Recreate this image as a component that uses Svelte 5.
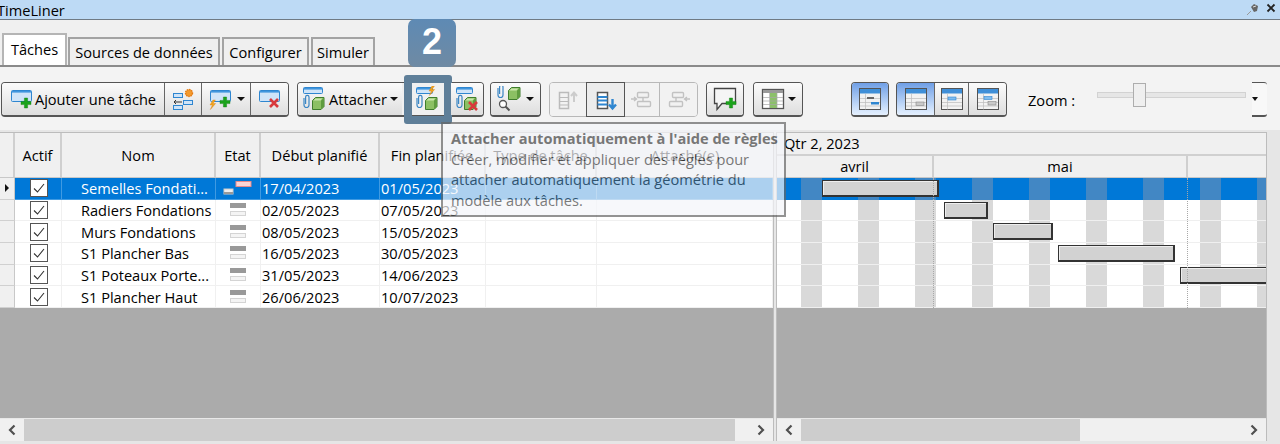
<script>
  const tasks = [
    { name: 'Semelles Fondati...', start: '17/04/2023', end: '01/05/2023', bar: [45, 117], sel: true },
    { name: 'Radiers Fondations', start: '02/05/2023', end: '07/05/2023', bar: [167, 44] },
    { name: 'Murs Fondations', start: '08/05/2023', end: '15/05/2023', bar: [216, 60] },
    { name: 'S1 Plancher Bas', start: '16/05/2023', end: '30/05/2023', bar: [281, 117] },
    { name: 'S1 Poteaux Porte...', start: '31/05/2023', end: '14/06/2023', bar: [403, 120] },
    { name: 'S1 Plancher Haut', start: '26/06/2023', end: '10/07/2023', bar: null }
  ];
</script>

{#snippet rect(x, y, w, h)}
  <rect x={x + .5} y={y + .5} width={w} height={h} rx="1" fill="#cfe4f8" stroke="#2f86d0" />
  <rect x={x + 1} y={y + 1} width={w - 1} height="1.6" fill="#3f96de" />
{/snippet}
{#snippet plus(x, y)}
  <path d="M{x - 1.6} {y - 5}h3.2v3.4h3.4v3.2h-3.4v3.4h-3.2v-3.4h-3.4v-3.2h3.4z" fill="#1ba31b" stroke="#0d7a0d" stroke-width=".4" />
{/snippet}
{#snippet cross(x, y)}
  <path d="M{x - 4} {y - 4}l8 8M{x + 4} {y - 4}l-8 8" stroke="#d8393b" stroke-width="2.6" fill="none" />
{/snippet}
{#snippet clip(x, y)}
  <path d="M{x} {y + 3}v7a2.500 2.500 0 0 0 5 0v-8a1.700 1.700 0 0 0-3.400 0v7" fill="none" stroke="#3b86c4" stroke-width="1.200" />
{/snippet}
{#snippet cube(x, y)}
  <path d="M{x + .5} {y + 3.500}l3-3h8.500v9l-3 3h-8.500z" fill="#8cc063" stroke="#3f7d2c" />
  <path d="M{x + 1.500} {y + 3.500}l2-2h7l-2 2z" fill="#c9e6ab" />
  <path d="M{x + 9} {y + 3.500}l3-3v9l-3 3z" fill="#5f9c3f" />
{/snippet}
{#snippet bolt(x, y)}
  <path d="M{x + 3} {y}l-3 5h2.4l-2 4.5 5.2-6h-2.6l2.4-3.5z" fill="#f2a51e" stroke="#d97f10" stroke-width=".4" />
{/snippet}
{#snippet dd()}
  <span class="caret"></span>
{/snippet}
{#snippet chevL()}
  <svg width="8" height="12" viewBox="0 0 8 12"><path d="M6.500 1.500L2 6l4.500 4.500" fill="none" stroke="#505050" stroke-width="2.200" /></svg>
{/snippet}
{#snippet chevR()}
  <svg width="8" height="12" viewBox="0 0 8 12"><path d="M1.500 1.500L6 6l-4.500 4.500" fill="none" stroke="#505050" stroke-width="2.200" /></svg>
{/snippet}
{#snippet view(kind)}
  <svg width="24" height="24" viewBox="0 0 24 24">
    <rect x="1.500" y="1.500" width="21" height="21" fill="#f2f2f2" stroke="#555" />
    <rect x="2" y="2" width="20" height="4.500" fill="#3f8fd8" />
    <path d="M7.500 6.500v16M2 11.500h20M2 15.500h20M2 19h20" stroke="#bbb" stroke-width=".7" />
    {#if kind === 0}
      <rect x="9" y="10" width="7" height="2" fill="#666" />
      <rect x="13" y="15" width="8" height="2.500" fill="#2f86d0" />
    {:else if kind === 1}
      <rect x="12" y="15" width="8" height="3.500" fill="#c9c9c9" stroke="#888" stroke-width=".6" />
    {:else if kind === 2}
      <rect x="8" y="10" width="8" height="3" fill="#7fbdf0" stroke="#2f86d0" stroke-width=".6" />
    {:else}
      <rect x="8" y="9.500" width="8" height="3" fill="#7fbdf0" stroke="#2f86d0" stroke-width=".6" />
      <rect x="12" y="14.500" width="8" height="3.500" fill="#c9c9c9" stroke="#888" stroke-width=".6" />
    {/if}
  </svg>
{/snippet}

<div class="app">
  <header class="title">
    <span class="title-text">TimeLiner</span>
    <svg class="pin" width="14" height="14" viewBox="0 0 14 14"><path d="M1 13l4-4" stroke="#999" /><path d="M5 5l3-3 4 2-1 5-3 1z" fill="#666" /><path d="M7 5l3-1" stroke="#ddd" /></svg>
    <svg class="close" width="10" height="10" viewBox="0 0 10 10"><path d="M1.500 1.500l7 7M8.500 1.500l-7 7" stroke="#222" stroke-width="1.800" /></svg>
  </header>

  <nav class="tabs">
    <span class="tab active">Tâches</span>
    <span class="tab t-src">Sources de données</span>
    <span class="tab t-cfg">Configurer</span>
    <span class="tab t-sim">Simuler</span>
  </nav>

  <div class="toolbar">
    <div class="group g1">
      <button class="btn w-add">
        <svg width="24" height="22" viewBox="0 0 24 22">{@render rect(1, 2, 20, 11)}{@render plus(16, 15)}</svg>
        <span>Ajouter une tâche</span>
      </button>
      <button class="btn w37">
        <svg width="24" height="24" viewBox="0 0 24 24">
          <rect x="2.500" y="6.500" width="9" height="4" fill="#cfe4f8" stroke="#2f86d0" />
          <rect x="12.500" y="13.500" width="9" height="4" fill="#cfe4f8" stroke="#2f86d0" />
          <rect x="2.500" y="18.500" width="9" height="4" fill="#cfe4f8" stroke="#2f86d0" />
          <path d="M3 15h8M3 15l2-2M3 15l2 2" stroke="#333" fill="none" />
          <circle cx="18" cy="6" r="3.500" fill="#f39a2e" stroke="#e47a12" stroke-dasharray="1.500 .8" stroke-width="1.400" />
        </svg>
      </button>
      <button class="btn w49">
        <svg width="26" height="22" viewBox="0 0 26 22">{@render rect(2, 2, 20, 11)}{@render plus(17, 14)}{@render bolt(2, 12)}</svg>
        {@render dd()}
      </button>
      <button class="btn w37">
        <svg width="24" height="22" viewBox="0 0 24 22">{@render rect(1, 2, 20, 11)}{@render cross(16, 15)}</svg>
      </button>
    </div>

    <div class="group g2">
      <button class="btn w-att">
        <svg width="24" height="26" viewBox="0 0 24 26">{@render rect(1, 1, 19, 6)}{@render clip(2, 9)}{@render cube(10, 11)}</svg>
        <span>Attacher</span>
        {@render dd()}
      </button>
      <button class="btn w49 plain">
        <svg width="24" height="26" viewBox="0 0 24 26">{@render rect(1, 1, 16, 6)}{@render clip(2, 9)}{@render cube(10, 11)}{@render bolt(14, 0)}</svg>
        <span class="highlight"></span>
      </button>
      <button class="btn w32">
        <svg width="24" height="26" viewBox="0 0 24 26">{@render rect(1, 1, 16, 6)}{@render clip(2, 9)}{@render cube(9, 11)}{@render cross(18, 20)}</svg>
      </button>
    </div>

    <div class="group g3">
      <button class="btn w49">
        <svg width="26" height="26" viewBox="0 0 26 26">
          {@render clip(1, -1)}{@render cube(11, 1)}
          <circle cx="6" cy="18" r="3.500" fill="#fff" stroke="#555" stroke-width="1.300" />
          <path d="M8.500 20.500l4 4" stroke="#555" stroke-width="2" />
        </svg>
        {@render dd()}
      </button>
    </div>

    <div class="group g4">
      <button class="btn w37 dis">
        <svg width="24" height="24" viewBox="0 0 24 24"><rect x="3.500" y="4.500" width="9" height="16" fill="none" stroke="#bbb" stroke-width="1.500" /><path d="M3.500 9.500h9M3.500 13.500h9M3.500 17h9" stroke="#bbb" /><path d="M18 14V5M15 8l3-3.500L21 8" stroke="#ccc" stroke-width="2" fill="none" /></svg>
      </button>
      <button class="btn w37 on">
        <svg width="24" height="24" viewBox="0 0 24 24"><rect x="3.500" y="4.500" width="10" height="16" fill="#fff" stroke="#555" stroke-width="1.500" /><path d="M3.500 9h10M3.500 12.500h10M3.500 16.500h10" stroke="#2f86d0" stroke-width="2" /><path d="M18.500 11v9M15 16.500l3.500 4 3.500-4" stroke="#2f86d0" stroke-width="2.400" fill="none" /></svg>
      </button>
      <button class="btn w36 dis">
        <svg width="24" height="24" viewBox="0 0 24 24"><rect x="7.500" y="4.500" width="11" height="5" rx="1" fill="none" stroke="#c2c2c2" stroke-width="1.400" /><rect x="7.500" y="13.500" width="13" height="5" rx="1" fill="none" stroke="#c2c2c2" stroke-width="1.400" /><path d="M1 11h5M4 9l2.500 2L4 13M13 9.500v4" stroke="#c2c2c2" stroke-width="1.400" fill="none" /></svg>
      </button>
      <button class="btn w37 dis">
        <svg width="24" height="24" viewBox="0 0 24 24"><rect x="5.500" y="4.500" width="11" height="5" rx="1" fill="none" stroke="#c2c2c2" stroke-width="1.400" /><rect x="2.500" y="13.500" width="13" height="5" rx="1" fill="none" stroke="#c2c2c2" stroke-width="1.400" /><path d="M23 11h-5M20 9l-2.500 2 2.500 2M9 9.500v4" stroke="#c2c2c2" stroke-width="1.400" fill="none" /></svg>
      </button>
    </div>

    <div class="group g5">
      <button class="btn w36">
        <svg width="24" height="26" viewBox="0 0 24 26"><path d="M1.500 2.500h21v15H9l-5 6v-6H1.500z" fill="#f5f5f5" stroke="#444" stroke-width="1.300" />{@render plus(18, 17)}</svg>
      </button>
    </div>

    <div class="group g6">
      <button class="btn w48">
        <svg width="24" height="24" viewBox="0 0 24 24"><rect x="1.500" y="2.500" width="21" height="19" fill="#fff" stroke="#555" stroke-width="1.300" /><rect x="2" y="3" width="20" height="3" fill="#9a9a9a" /><rect x="9" y="6" width="7" height="15" fill="#8cc06a" /><path d="M2 10.500h20M2 14h20M2 17.500h20M8.500 6v15M16 6v15" stroke="#a8a8a8" stroke-width=".7" /></svg>
        {@render dd()}
      </button>
    </div>

    <div class="group g7">
      <button class="btn w36 blue">{@render view(0)}</button>
    </div>

    <div class="group g8">
      <button class="btn w38 blue">{@render view(1)}</button>
      <button class="btn w34">{@render view(2)}</button>
      <button class="btn w37">{@render view(3)}</button>
    </div>

    <span class="zoom-label">Zoom :</span>
    <div class="slider"><span class="track"></span><span class="thumb"></span></div>
    <button class="btn zoom-dd"><span class="caret small"></span></button>
  </div>

  <main class="panes">
    <section class="pane left">
      <div class="thead">
        <span class="hcell c0"></span>
        <span class="hcell c1">Actif</span>
        <span class="hcell c2">Nom</span>
        <span class="hcell c3">Etat</span>
        <span class="hcell c4">Début planifié</span>
        <span class="hcell c5">Fin planifiée</span>
        <span class="hcell c6">Type de tâche</span>
        <span class="hcell c7">Attaché(e)</span>
      </div>
      <div class="tbody">
        {#each tasks as t}
          <div class="row" class:sel={t.sel}>
            <span class="cell c0 rh">{#if t.sel}<i class="tri"></i>{/if}</span>
            <span class="cell c1 ck">
              <svg width="18" height="18" viewBox="0 0 18 18"><rect x=".5" y=".5" width="17" height="17" fill="#fff" stroke="#555" /><path d="M4 9.500l3.500 3.500L14 5" fill="none" stroke="#333" stroke-width="1.100" /></svg>
            </span>
            <span class="cell c2 name">{t.name}</span>
            <span class="cell c3 st">
              {#if t.sel}
                <svg width="30" height="14" viewBox="0 0 30 14"><rect x="13" y=".5" width="15" height="5" fill="#fbd5d5" stroke="#e88a8a" /><rect x="1" y="8" width="9" height="5" fill="#eee" stroke="#ccc" /><rect x="1" y="11" width="9" height="2" fill="#999" /></svg>
              {:else}
                <svg width="16" height="14" viewBox="0 0 16 14"><rect y="0" width="16" height="5" fill="#999" /><rect x=".5" y="8.500" width="15" height="4" fill="#f4f4f4" stroke="#d4d4d4" /></svg>
              {/if}
            </span>
            <span class="cell c4 date">{t.start}</span>
            <span class="cell c5 date">{t.end}</span>
            <span class="cell c6"></span>
            <span class="cell c7"></span>
          </div>
        {/each}
      </div>
      <div class="empty"></div>
      <div class="scroll">
        <span class="arrow l">{@render chevL()}</span><span class="sthumb st-left"></span><span class="arrow r">{@render chevR()}</span>
      </div>
    </section>

    <section class="pane right">
      <div class="ghead">
        <div class="qtr">Qtr 2, 2023</div>
        <div class="months"><span class="m1">avril</span><span class="m2">mai</span><span class="m3"></span></div>
      </div>
      <div class="gbody">
        {#each tasks as t}
          <div class="grow" class:sel={t.sel}>
            {#if t.bar}<span class="bar" style="left:{t.bar[0]}px;width:{t.bar[1]}px"></span>{/if}
          </div>
        {/each}
        <i class="mline a"></i><i class="mline b"></i>
      </div>
      <div class="empty"></div>
      <div class="scroll">
        <span class="arrow l">{@render chevL()}</span><span class="sthumb st-right"></span><span class="spacer"></span><span class="arrow r">{@render chevR()}</span>
      </div>
    </section>
  </main>

  <div class="badge">2</div>
  <div class="tooltip">
    <strong>Attacher automatiquement à l'aide de règles</strong>
    <p>Créer, modifier et appliquer des règles pour attacher automatiquement la géométrie du modèle aux tâches.</p>
  </div>
</div>

<style>
  :global(body) { margin: 0; background: #f0f0f0; }
  .app {
    position: relative; width: 1280px; height: 444px; overflow: hidden;
    display: flex; flex-direction: column; background: #f0f0f0;
    font-family: "Open Sans", "Noto Sans", sans-serif; font-size: 14.6px; color: #000;
  }
  .title {
    height: 19px; flex: none; background: #bddaf5; border-bottom: 1px solid #6f7a84;
    display: flex; align-items: center; position: relative;
  }
  .title-text { margin-left: -3px; font-size: 14.6px; line-height: 18px; }
  .pin { position: absolute; left: 1246px; top: 2px; }
  .close { position: absolute; left: 1266px; top: 3px; }

  .tabs {
    height: 47px; flex: none; box-sizing: border-box; display: flex; align-items: flex-end;
    padding-left: 2px; border-bottom: 2px solid #8a8a8a;
  }
  .tab {
    height: 28px; box-sizing: border-box; display: flex; align-items: center; justify-content: center;
    background: #efefef; border: 2px solid #a3a3a3; border-bottom: 0; margin-left: 2px;
  }
  .tab.active { height: 32px; width: 65px; margin-left: 0; background: #fff; border-color: #b5b5b5; padding-bottom: 2px; }
  .t-src { width: 152px; margin-left: 1px; }
  .t-cfg { width: 87px; margin-left: 2px; }
  .t-sim { width: 64px; margin-left: 2px; }

  .toolbar {
    height: 63px; flex: none; box-sizing: border-box; padding: 15px 0 0 1px;
    display: flex; align-items: flex-start; background: #f3f3f3;
  }
  .group { display: flex; height: 35px; border: 1px solid #555; border-bottom-width: 2px; border-radius: 4px; box-sizing: border-box; }
  .g2 { margin-left: 8px; }
  .g3 { margin-left: 6px; }
  .g4 { margin-left: 8px; border-color: #b8b8b8; border-bottom-width: 1px; }
  .g5 { margin-left: 8px; }
  .g6 { margin-left: 9px; }
  .g7 { margin-left: 48px; }
  .g8 { margin-left: 7px; }
  .btn {
    position: relative; height: 100%; padding: 0; margin: 0; border: 0; border-right: 1px solid #666;
    background: linear-gradient(#fbfbfb, #dedede); display: flex; align-items: center; justify-content: center;
    gap: 3px; font: inherit; color: #000; box-sizing: border-box;
  }
  .btn:first-child { border-radius: 3px 0 0 3px; }
  .btn:last-child { border-right: 0; border-radius: 0 3px 3px 0; }
  .btn:only-child { border-radius: 3px; }
  .w-add { width: 163px; gap: 1px; }
  .w-att { width: 104px; border-right: 0; }
  .w32 { width: 32px; }
  .w34 { width: 34px; }
  .w36 { width: 36px; }
  .w37 { width: 37px; }
  .w38 { width: 38px; }
  .w48 { width: 48px; }
  .w49 { width: 49px; }
  .plain { background: #f0f0f0; border-right: 0; }
  .highlight {
    position: absolute; left: 2px; top: -8px; width: 48px; height: 49px; box-sizing: border-box;
    border: 8px solid #5f7f99; border-radius: 3px;
  }
  .dis { background: #f2f2f2; border-right-color: #b8b8b8; }
  .on { background: #ececec; box-shadow: 0 0 0 1px #555; z-index: 1; border-right: 0; }
  .blue { background: linear-gradient(#6f9fe6, #cfe2fb 80%, #e4effd); }
  .caret { width: 0; height: 0; border: 4px solid transparent; border-top: 4px solid #111; border-bottom: 0; }
  .caret.small { border-width: 4px 3px 0; }

  .zoom-label { margin: 9px 0 0 21px; width: 49px; white-space: nowrap; line-height: 18px; }
  .slider { position: relative; width: 149px; height: 24px; margin: 1px 0 0 20px; }
  .track { position: absolute; left: 0; right: 0; top: 9px; background: #e6e6e6; border: 1px solid #d2d2d2; box-sizing: border-box; height: 6px; }
  .thumb { position: absolute; left: 36px; top: 0; width: 13px; height: 24px; box-sizing: border-box; background: #efefef; border: 1px solid #adadad; }
  .zoom-dd {
    width: 15px; height: 35px; margin-left: 6px; border: 1px solid #555; border-left: 0; border-bottom-width: 2px;
    border-radius: 0 4px 4px 0; background: #f8f8f8; justify-content: flex-start; padding-left: 0;
  }

  .panes { flex: 1; display: flex; align-items: stretch; min-height: 0; background: #e6e6e6; padding-bottom: 3px; box-sizing: border-box; }
  .pane { display: flex; flex-direction: column; box-sizing: border-box; border: 1px solid #bcbcbc; border-bottom: 0; background: #ababab; }
  .left { width: 774px; margin-top: 2px; border-left: 0; }
  .right { width: 491px; margin-left: 2px; margin-top: 2px; }

  .thead { height: 45px; display: flex; flex: none; background: #f0f0f0; border-bottom: 1px solid #c8c8c8; box-sizing: border-box; }
  .hcell {
    display: flex; align-items: center; justify-content: center; box-sizing: border-box;
    border-right: 2px solid #cfcfcf; white-space: nowrap;
  }
  .c0 { width: 15px; flex: none; }
  .c1 { width: 47px; flex: none; }
  .c2 { width: 154px; flex: none; }
  .c3 { width: 45px; flex: none; }
  .c4 { width: 119px; flex: none; }
  .c5 { width: 106px; flex: none; }
  .c6 { width: 111px; flex: none; }
  .c7 { flex: 1; border-right: 0; }

  .tbody { flex: none; }
  .row { height: 21.67px; display: flex; background: #fff; box-sizing: border-box; }
  .cell {
    display: flex; align-items: center; box-sizing: border-box; white-space: nowrap;
    border-right: 1px solid #f0f0f0; border-bottom: 1px solid #f0f0f0; overflow: hidden;
  }
  .rh { background: #f0f0f0; border-right: 1px solid #c8c8c8; border-bottom: 1px solid #d0d0d0; justify-content: center; }
  .tri { width: 0; height: 0; border: 4px solid transparent; border-left: 4px solid #111; border-right: 0; }
  .ck { justify-content: center; padding-left: 2px; }
  .name { padding-left: 19px; }
  .st { justify-content: center; }
  .date { padding-left: 1px; }
  .sel .cell:not(.rh) { background: #0078d7; color: #fff; border-color: #3f9ae2; }
  .sel .st { justify-content: flex-start; padding-left: 7px; }

  .empty { flex: 1; background: #ababab; }
  .scroll { height: 23px; flex: none; display: flex; background: #f0f0f0; border-top: 1px solid #e8e8e8; box-sizing: border-box; }
  .arrow { width: 24px; flex: none; display: flex; align-items: center; justify-content: center; }
  .sthumb { background: #cdcdcd; }
  .st-left { width: 711px; }
  .left .arrow.r { width: 38px; padding-left: 14px; box-sizing: border-box; }
  .st-right { width: 279px; }
  .spacer { flex: 1; }

  .ghead { flex: none; height: 45px; background: #f0f0f0; box-sizing: border-box; border-bottom: 1px solid #c8c8c8; }
  .qtr { height: 23px; line-height: 21px; padding-left: 7px; box-sizing: border-box; border-bottom: 2px solid #d0d0d0; }
  .months { height: 21px; display: flex; line-height: 20px; text-align: center; }
  .m1 { width: 155px; border-right: 2px solid #cfcfcf; }
  .m2 { width: 252px; border-right: 2px solid #cfcfcf; }
  .m3 { flex: 1; }

  .gbody { position: relative; flex: none; overflow: hidden; }
  .grow {
    position: relative; height: 21.67px; box-sizing: border-box; border-bottom: 1px solid #efefef; overflow: hidden;
    background: repeating-linear-gradient(90deg, #fff 0 24px, #d9d9d9 24px 45px, #fff 45px 57px);
  }
  .grow.sel {
    border-bottom: 0;
    background: repeating-linear-gradient(90deg, #0078d7 0 24px, #4287c4 24px 45px, #0078d7 45px 57px);
  }
  .bar {
    position: absolute; top: 2px; height: 17px; box-sizing: border-box; background: #d2d2d2;
    border: 1px solid #333; border-width: 1px 2px 2px 1px; box-shadow: inset 1px 1px 0 #eee;
  }
  .mline { position: absolute; top: 0; bottom: 0; width: 0; border-left: 1px dotted #a8a8a8; }
  .mline.a { left: 156px; }
  .mline.b { left: 410px; }

  .badge {
    position: absolute; left: 408px; top: 19px; width: 48px; height: 48px; border-radius: 7px;
    background: linear-gradient(#5e8ab4, #6f8aa3); color: #fff; font: 700 36px/46px "Liberation Sans", sans-serif; text-align: center;
  }
  .tooltip {
    position: absolute; left: 441px; top: 122px; width: 345px; height: 95px; box-sizing: border-box;
    padding: 4px 8px; opacity: .7; background: #f5f6fa; border: 2px solid #666; color: #444; line-height: 20.5px;
  }
  .tooltip strong { display: block; white-space: nowrap; }
  .tooltip p { margin: 0; width: 325px; }
</style>
